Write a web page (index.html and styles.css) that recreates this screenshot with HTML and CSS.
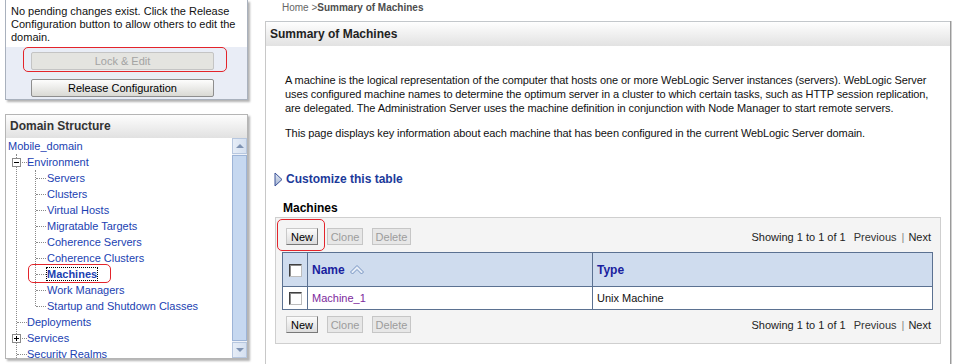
FILE: index.html
```html
<!DOCTYPE html>
<html lang="en">
<head>
    <meta charset="UTF-8">
    <title>Summary of Machines</title>
    <link rel="stylesheet" href="styles.css">
</head>
<body>
    <div class="page">
        <aside class="sidebar">
            <div class="change-center">
                <p class="cc-msg">No pending changes exist. Click the Release Configuration button to allow others to edit the domain.</p>
                <div class="cc-actions">
                    <button class="wide-btn" disabled>Lock &amp; Edit</button>
                    <button class="wide-btn">Release Configuration</button>
                    <span class="callout lock-callout"></span>
                </div>
            </div>

            <div class="domain-box">
                <div class="box-head">Domain Structure</div>
                <div class="tree-body">
                    <div class="tree">
                        <a href="#">Mobile_domain</a>
                        <ul class="lvl1">
                            <li>
                                <span class="toggle minus"></span>
                                <a href="#">Environment</a>
                                <ul class="lvl2">
                                    <li><a href="#">Servers</a></li>
                                    <li><a href="#">Clusters</a></li>
                                    <li><a href="#">Virtual Hosts</a></li>
                                    <li><a href="#">Migratable Targets</a></li>
                                    <li><a href="#">Coherence Servers</a></li>
                                    <li><a href="#">Coherence Clusters</a></li>
                                    <li><a href="#" class="current">Machines</a><span class="callout tree-callout"></span></li>
                                    <li><a href="#">Work Managers</a></li>
                                    <li><a href="#">Startup and Shutdown Classes</a></li>
                                </ul>
                            </li>
                            <li><a href="#">Deployments</a></li>
                            <li><span class="toggle plus"></span><a href="#">Services</a></li>
                            <li><a href="#">Security Realms</a></li>
                        </ul>
                    </div>
                    <div class="scrollbar">
                        <div class="sb-btn"><span class="arrow up"></span></div>
                        <div class="sb-thumb"></div>
                        <div class="sb-btn"><span class="arrow down"></span></div>
                    </div>
                </div>
            </div>
        </aside>

        <main class="content">
            <div class="crumbs">Home &gt;<b>Summary of Machines</b></div>
            <section class="panel">
                <div class="panel-head">Summary of Machines</div>
                <div class="panel-body">
                    <div class="intro">
                        <p>A machine is the logical representation of the computer that hosts one or more WebLogic Server instances (servers). WebLogic Server uses configured machine names to determine the optimum server in a cluster to which certain tasks, such as HTTP session replication, are delegated. The Administration Server uses the machine definition in conjunction with Node Manager to start remote servers.</p>
                        <p>This page displays key information about each machine that has been configured in the current WebLogic Server domain.</p>
                    </div>

                    <a href="#" class="customize">
                        <svg width="9" height="15" viewBox="0 0 9 15">
                            <defs>
                                <linearGradient id="tri" x1="0" y1="0" x2="0" y2="1">
                                    <stop offset="0" stop-color="#e6ecf6"/>
                                    <stop offset="1" stop-color="#9fb0d0"/>
                                </linearGradient>
                            </defs>
                            <polygon points="1,1 8,7.5 1,14" fill="url(#tri)" stroke="#3a5298" stroke-width="1"/>
                        </svg>
                        Customize this table
                    </a>

                    <h3 class="tbl-title">Machines</h3>
                    <div class="table-wrap">
                        <div class="table-bar">
                            <div class="btns">
                                <button class="btn w-new">New</button>
                                <button class="btn w-clone" disabled>Clone</button>
                                <button class="btn w-delete" disabled>Delete</button>
                            </div>
                            <div class="pager">Showing 1 to 1 of 1<span class="prev">Previous</span><span class="sep">|</span><span>Next</span></div>
                        </div>

                        <table class="grid">
                            <colgroup>
                                <col class="c-check">
                                <col class="c-name">
                                <col>
                            </colgroup>
                            <thead>
                                <tr>
                                    <th class="chk"><span class="cbox"></span></th>
                                    <th>Name
                                        <svg class="sort" width="14" height="10" viewBox="0 0 14 10">
                                            <polygon points="7,0.5 13.5,7 11.5,9 7,4.5 2.5,9 0.5,7" fill="#e6edf7" stroke="#7592c0" stroke-width="1"/>
                                        </svg>
                                    </th>
                                    <th>Type</th>
                                </tr>
                            </thead>
                            <tbody>
                                <tr>
                                    <td class="chk"><span class="cbox"></span></td>
                                    <td><a href="#" class="visited">Machine_1</a></td>
                                    <td>Unix Machine</td>
                                </tr>
                            </tbody>
                        </table>

                        <div class="table-bar bottom">
                            <div class="btns">
                                <button class="btn w-new">New</button>
                                <button class="btn w-clone" disabled>Clone</button>
                                <button class="btn w-delete" disabled>Delete</button>
                            </div>
                            <div class="pager">Showing 1 to 1 of 1<span class="prev">Previous</span><span class="sep">|</span><span>Next</span></div>
                        </div>

                        <span class="callout new-callout"></span>
                    </div>
                </div>
            </section>
        </main>
    </div>
</body>
</html>
```

FILE: styles.css
```css
html, body {
    margin: 0;
    height: 364px;
    overflow: hidden;
    background: #fff;
}
body {
    font-family: "Liberation Sans", Arial, sans-serif;
    font-size: 11px;
    color: #111;
}
.page {
    display: flex;
    align-items: flex-start;
}

/* left column */
.sidebar {
    width: 250px;
    flex: none;
    padding-left: 5px;
    box-sizing: border-box;
}
.change-center {
    width: 243px;
    box-sizing: border-box;
    border: 1px solid #a9b1bd;
    border-top: none;
    background: #e9edf6;
    box-shadow: 2px 2px 2px rgba(0,0,0,0.3);
}
.cc-msg {
    margin: 0;
    background: #fff;
    padding: 5px 5px 3px;
    line-height: 13px;
}
.cc-actions {
    position: relative;
    display: flex;
    flex-direction: column;
    gap: 9px;
    padding: 5px 0 2px 25px;
}
.wide-btn {
    width: 183px;
    height: 18px;
    padding: 0;
    font-family: "Liberation Sans", Arial, sans-serif;
    font-size: 11px;
    color: #000;
    border: 1px solid #8e8e8e;
    border-radius: 2px;
    background: linear-gradient(#fdfdfd, #d9d9d4);
}
.wide-btn:disabled {
    color: #a3a3a3;
    background: #e4e4e0;
    border-color: #c4c4c4;
}
.callout {
    position: absolute;
    border: 1px solid #e3242b;
    border-radius: 5px;
    box-sizing: border-box;
}
.lock-callout {
    left: 17px;
    top: 0;
    width: 204px;
    height: 25px;
}

.domain-box {
    margin-top: 14px;
    width: 243px;
    box-sizing: border-box;
    border: 1px solid #b5b5b5;
    box-shadow: 2px 2px 2px rgba(0,0,0,0.3);
    background: #fff;
}
.box-head {
    height: 23px;
    line-height: 23px;
    padding-left: 4px;
    font-size: 12px;
    font-weight: bold;
    color: #333;
    background: linear-gradient(#fdfdfd, #e1e1e1);
}
.tree-body {
    display: flex;
    height: 220px;
}
.tree {
    flex: 1;
    overflow: hidden;
    padding-left: 2px;
    line-height: 16px;
    white-space: nowrap;
}
.tree a {
    color: #1b3fb2;
    text-decoration: none;
}
.tree ul {
    list-style: none;
    margin: 0;
    padding: 0;
    border-left: 1px dotted #8a8a8a;
}
.tree li {
    position: relative;
}
.tree li::before {
    content: "";
    position: absolute;
    left: 0;
    top: 8px;
    width: 10px;
    border-top: 1px dotted #8a8a8a;
}
.tree .lvl1 {
    margin-left: 8px;
}
.tree .lvl1 > li {
    padding-left: 10px;
}
.tree .lvl2 {
    margin-left: 8px;
}
.tree .lvl2 > li {
    padding-left: 11px;
}
.tree .lvl2 > li:last-child::after {
    content: "";
    position: absolute;
    left: -1px;
    top: 9px;
    bottom: 0;
    border-left: 1px solid #fff;
}
.tree a.current {
    font-weight: bold;
    outline: 1px dotted #000;
}
.tree-callout {
    left: -8px;
    top: -2px;
    width: 83px;
    height: 19px;
}
.toggle {
    position: absolute;
    left: -5px;
    top: 4px;
    width: 9px;
    height: 9px;
    box-sizing: border-box;
    border: 1px solid #8a8a8a;
    z-index: 1;
}
.toggle.minus {
    background: linear-gradient(#000, #000) center / 5px 1px no-repeat, #fff;
}
.toggle.plus {
    background: linear-gradient(#000, #000) center / 5px 1px no-repeat,
                linear-gradient(#000, #000) center / 1px 5px no-repeat, #fff;
}
.scrollbar {
    width: 15px;
    display: flex;
    flex-direction: column;
    background: #eef2f9;
}
.sb-btn {
    height: 16px;
    box-sizing: border-box;
    border: 1px solid #b7c7df;
    background: linear-gradient(90deg, #e6edf7, #d5e0f0);
    display: flex;
    align-items: center;
    justify-content: center;
}
.arrow {
    width: 0;
    height: 0;
    border-left: 4px solid transparent;
    border-right: 4px solid transparent;
}
.arrow.up {
    border-bottom: 4px solid #7f93b3;
}
.arrow.down {
    border-top: 4px solid #7f93b3;
}
.sb-thumb {
    flex: 1;
    margin: 1px 0;
    background: #c6d8f0;
    border: 1px solid #9db4d7;
}

/* right column */
.content {
    margin-left: 15px;
    width: 687px;
    flex: none;
}
.crumbs {
    height: 21px;
    padding-left: 17px;
    font-size: 10px;
    line-height: 16px;
    color: #666;
}
.crumbs b {
    color: #4d4d4d;
}
.panel {
    width: 686px;
    height: 343px;
    box-sizing: border-box;
    border-left: 1px solid #c8c8c8;
    border-right: 1px solid #9a9a9a;
    box-shadow: 1px 0 0 #cfcfcf;
}
.panel-head {
    height: 24px;
    line-height: 24px;
    border-top: 1px solid #c3c7cb;
    padding-left: 4px;
    font-size: 12px;
    font-weight: bold;
    color: #222;
    background: linear-gradient(#fefefe, #e2e2e2);
}
.panel-body {
    padding: 27px 9px 0;
}
.intro p {
    margin: 0 0 11px 10px;
    line-height: 14px;
    letter-spacing: -0.1px;
}
.intro p:last-child {
    margin-bottom: 0;
}
.customize {
    display: flex;
    align-items: center;
    gap: 3px;
    height: 16px;
    margin: 31px 0 0 -1px;
    font-size: 12px;
    font-weight: bold;
    color: #1c3a9a;
    text-decoration: none;
}
.tbl-title {
    margin: 13px 0 1px 8px;
    font-size: 12px;
    line-height: 16px;
    color: #000;
}
.table-wrap {
    position: relative;
    border: 1px solid #cfcfcf;
    background: #f4f4f4;
    padding: 10px 7px 10px 6px;
}
.table-bar {
    display: flex;
    align-items: center;
    justify-content: space-between;
    height: 17px;
    padding: 0 2px 0 4px;
}
.table-bar.bottom {
    margin-top: 6px;
}
.btns {
    display: flex;
    gap: 9px;
}
.btn {
    height: 17px;
    padding: 0;
    font-family: "Liberation Sans", Arial, sans-serif;
    font-size: 11px;
    color: #000;
    border: 1px solid;
    border-color: #c9c9c9 #787878 #787878 #c9c9c9;
    background: linear-gradient(#fbfbfb, #dcdcdc);
}
.btn:disabled {
    color: #9c9c9c;
    border-color: #c6c6c6;
    background: #e7e7e7;
}
.w-new { width: 32px; }
.w-clone { width: 36px; }
.w-delete { width: 39px; }
.pager {
    color: #222;
}
.pager .prev {
    margin-left: 8px;
    color: #333;
}
.pager .sep {
    margin: 0 4px 0 5px;
    color: #888;
}
.new-callout {
    left: 1px;
    top: 1px;
    width: 48px;
    height: 32px;
}

.grid {
    width: 651px;
    margin-top: 7px;
    border-collapse: collapse;
    background: #fff;
}
.grid th, .grid td {
    border: 1px solid #5b7191;
    text-align: left;
    padding: 0 4px;
}
.c-check { width: 25px; }
.c-name { width: 285px; }
.grid th {
    height: 33px;
    background: #cfdcee;
    font-size: 12px;
    font-weight: bold;
    color: #1a1f9e;
}
.grid td {
    height: 22px;
}
.grid .chk {
    padding: 0;
    text-align: center;
}
.cbox {
    display: inline-block;
    vertical-align: middle;
    width: 13px;
    height: 13px;
    box-sizing: border-box;
    border: 1px solid;
    border-color: #404040 #bdbdbd #bdbdbd #404040;
    box-shadow: inset 1px 1px 0 #8c8c8c;
    background: #fff;
}
.sort {
    vertical-align: -1px;
    margin-left: 2px;
}
.visited {
    color: #7d2a9c;
    text-decoration: none;
}
```
